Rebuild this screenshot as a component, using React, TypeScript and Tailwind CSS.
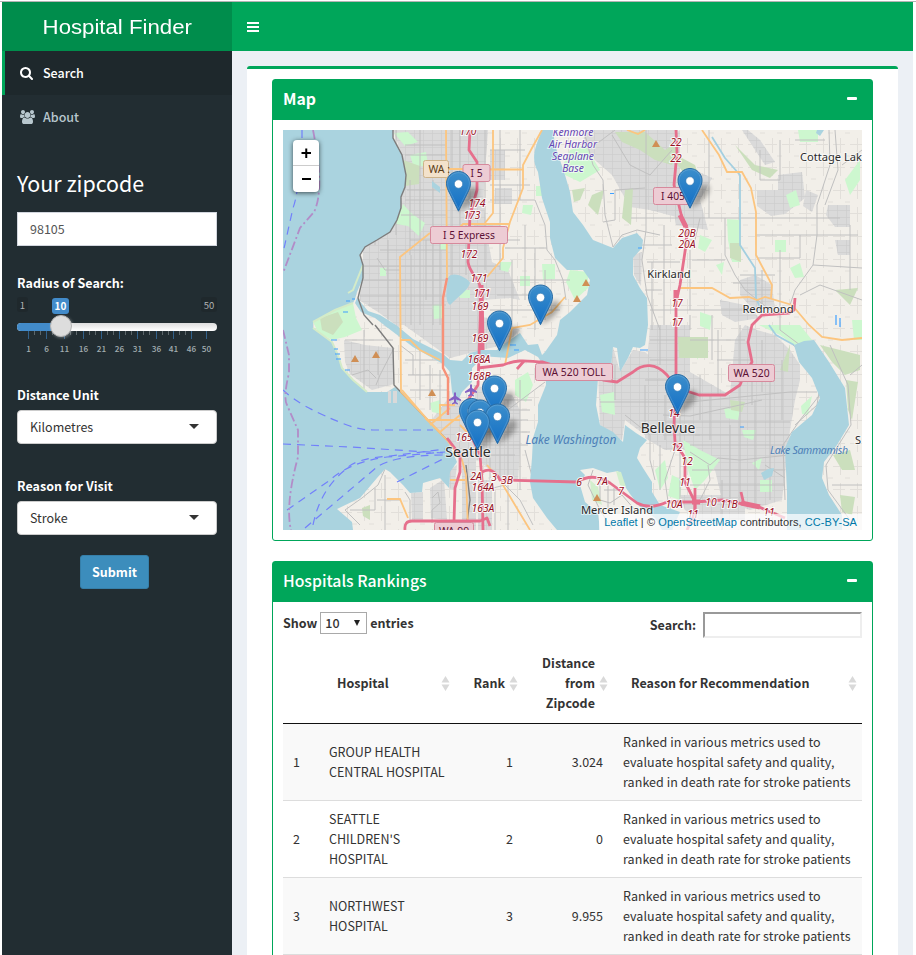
import React from "react";

const UI = "font-['Noto_Sans_CJK_SC','Noto_Sans_CJK_JP',sans-serif]";

function SearchIcon() {
  return (
    <svg viewBox="0 0 1664 1792" className="h-[14px] w-[13px]" fill="currentColor">
      <path d="M1152 832q0-185-131.5-316.5t-316.5-131.5-316.5 131.5-131.5 316.5 131.5 316.5 316.5 131.5 316.5-131.5 131.5-316.5zm512 832q0 52-38 90t-90 38q-54 0-90-38l-343-342q-179 124-399 124-143 0-273.5-55.5t-225-150-150-225-55.5-273.5 55.5-273.5 150-225 225-150 273.5-55.5 273.5 55.5 225 150 150 225 55.5 273.5q0 220-124 399l343 343q37 37 37 90z" />
    </svg>
  );
}

function UsersIcon() {
  return (
    <svg viewBox="0 0 1920 1792" className="h-[14px] w-[15px]" fill="currentColor">
      <path d="M593 896q-162 5-265 128h-134q-82 0-138-40.5t-56-118.5q0-353 124-353 6 0 43.5 21t97.5 42.5 119 21.5q67 0 133-23-5 37-5 66 0 139 81 256zM1664 1533q0 120-73 189.5t-194 69.5h-874q-121 0-194-69.5t-73-189.5q0-53 3.5-103.5t14-109 26.5-108.5 43-97.5 62-81 85.5-53.5 111.5-20q10 0 43 21.5t73 48 107 48 135 21.5 135-21.5 107-48 73-48 43-21.5q61 0 111.5 20t85.5 53.5 62 81 43 97.5 26.5 108.5 14 109 3.5 103.5zM640 256q0 106-75 181t-181 75-181-75-75-181 75-181 181-75 181 75 75 181zM1344 640q0 159-112.5 271.5t-271.5 112.5-271.5-112.5-112.5-271.5 112.5-271.5 271.5-112.5 271.5 112.5 112.5 271.5zM1920 865q0 78-56 118.5t-138 40.5h-134q-103-123-265-128 81-117 81-256 0-29-5-66 66 23 133 23 59 0 119-21.5t97.5-42.5 43.5-21q124 0 124 353zM1792 256q0 106-75 181t-181 75-181-75-75-181 75-181 181-75 181 75 75 181z" />
    </svg>
  );
}

const TICKS: [number, string][] = [
  [11.5, "1"], [29.5, "6"], [47.5, "11"], [66.5, "16"], [84.5, "21"], [102.5, "26"],
  [120.5, "31"], [139.5, "36"], [156.5, "41"], [174.5, "46"], [189.5, "50"],
];

function Slider() {
  return (
    <div className="relative h-[60px] w-[200px]">
      <span className="absolute left-0 top-[3px] flex h-[15px] w-[11px] items-center justify-center rounded-[3px] bg-[#1f282c] text-[9.5px] text-[#b0b3b4]">1</span>
      <span className="absolute right-0 top-[3px] flex h-[15px] w-[16px] items-center justify-center rounded-[3px] bg-[#1f282c] text-[9.5px] text-[#b0b3b4]">50</span>
      <span className="absolute left-[35px] top-[4px] flex h-[16px] w-[17px] items-center justify-center rounded-[3px] bg-[#428bca] text-[10px] font-bold text-white">10</span>
      <div className="absolute left-0 top-[29px] h-[8px] w-full rounded-[8px] bg-gradient-to-b from-[#dddddd] to-white" />
      <div className="absolute left-0 top-[29px] h-[8px] w-[44px] rounded-l-[8px] bg-[#428bca]" />
      <svg className="absolute left-0 top-[37px] h-[8px] w-[200px]" viewBox="0 0 200 8">
        {TICKS.map(([x], i) => (
          <g key={x}>
            <rect x={x - 0.5} y="0" width="1" height="8" fill="#32618a" />
            {i < 9 &&
              [6, 12].map((k) => <rect key={k} x={x - 0.5 + k} y="0" width="1" height="4" fill="#5d676b" />)}
          </g>
        ))}
      </svg>
      {TICKS.map(([x, t]) => (
        <span key={x} className="absolute top-[48px] w-5 -translate-x-1/2 text-center text-[8.2px] font-medium leading-[13px] text-[#a3aeb1]" style={{ left: x }}>{t}</span>
      ))}
      <div className="absolute left-[33px] top-[21px] h-[22px] w-[22px] rounded-full border border-[#b5b5b5] bg-[#dddddd] shadow-[1px_1px_3px_rgba(255,255,255,0.3)]" />
    </div>
  );
}

function Select({ value }: { value: string }) {
  return (
    <div className="flex h-[34px] w-[200px] items-center justify-between rounded-[4px] border border-[#cccccc] bg-white pl-[12px] pr-[17px] text-[12.5px] text-[#333]">
      <span>{value}</span>
      <span className="-mt-[2px] border-x-[5px] border-t-[5px] border-x-transparent border-t-[#333]" />
    </div>
  );
}

const WATER = [
  "M283 130H393L393 138 402 155 406 175 405 187 401 197 401 208 397 220 390 232 377 240 365 247 360 255 363 265 363 278 357 292 355 299 353 303 335 310 313 322 313 328 332 342 338 355 342 368 353 380 367 392 387 392 395 387 403 393 423 415 440 432 447 440 453 453 457 462 450 472 449 488 440 478 423 483 422 492 410 493 403 485 390 472 385 469 377 478 360 498 337 509 352 522 353 530H283Z",
  "M542 130C534 150 531 158 538 172L540 185 542 198 550 222 550 238 555 258 567 270 583 270 590 280 587 295 570 312 560 320 557 335 545 352 542 355 538 344 528 345 520 333 507 342 497 350 481 350 481 356 508 358 525 350 538 357 545 368 546 385 538 405 538 422 533 438 532 458 530 482 533 498 547 518 557 530H603L672 530 680 512 660 505 652 492 652 482 643 468 637 458 640 448 647 440 636 433 625 425 623 442 613 432 600 425 596 405 598 378 603 368 611 368 613 347 617 348 620 372 628 358 633 347 640 348 645 345 648 325 647 298 640 288 633 275 633 258 642 248 643 240 637 233 622 238 613 248 593 240 583 225 573 212 570 192 565 175 555 145 553 130Z",
  "M443 354L450 360 462 361 470 353 481 350 482 358 472 368 472 382 462 392 456 405 452 392 450 372 443 364 413 347 388 328 375 318 361 312 355 303 357 298 368 311 380 315 396 325 413 339Z",
  "M448 278C452 270 468 278 470 283 468 290 460 295 450 305 445 302 446 290 448 278Z",
  "M794 345L804 341 814 340 829 362 845 388 849 425 837 445 824 462 822 478 829 495 842 515 842 530H787V492L785 448 792 432 812 415 820 398 812 378 799 362Z",
  "M761 473L768 469 774 468 772 476 764 480Z",
  "M432 181L440 187 440 193 432 187Z",
  "M817 130H824L820 136 816 133Z",
];

const URBAN = [
  "M393 130L402 155 406 175 400 208 390 232 363 248 363 280 359 300 378 312 396 325H482V300L510 298 520 300 508 270 492 262 488 240 483 200 488 130Z",
  "M404 325L450 358 482 350 482 322ZM400 325H382L397 332Z",
  "M490 150H505V180H490ZM495 188H512V204H494Z",
  "M344 340L365 345 393 348 394 384 372 390 350 374 345 362Z",
  "M470 315L500 320 520 330 505 345 480 350Z",
  "M474 385L512 395 520 410 520 450 518 480 500 478 478 460Z",
  "M447 400L470 400 480 460 462 462 447 440 430 422Z",
  "M585 130H640L655 150 680 130V218L650 210 630 207 612 175 595 160 583 145Z",
  "M640 130H678V150H655Z",
  "M670 182L695 170 712 178 700 200 708 230 676 225Z",
  "M598 368H611L613 347 620 372 633 350 645 352 660 365V442L645 435 625 420 622 440 600 425Z",
  "M650 325H690V372L730 395 735 340 745 325 757 330 775 335 790 350 800 365 800 380 795 400 790 430 782 500 750 510 722 500 715 470 690 450 665 450 645 438V400Z",
  "M757 190H778V175L802 172 805 198 785 214 771 216 757 206Z",
  "M828 205H850V227H835L826 215ZM806 190L818 195 812 212 803 206Z",
  "M742 130L765 165 775 162 760 140 748 130Z",
  "M411 493L423 492 423 522 412 520ZM430 488L444 479 447 520 431 518ZM449 470L457 465 454 490 449 488Z",
  "M462 460H476V530H462ZM478 480H492V530H478Z",
  "M633 255L642 252 641 286 634 275Z",
  "M755 275L772 285 775 310 752 308 740 295 740 280ZM720 300L745 305 760 318 735 322 722 315Z",
  "M680 495H745V520H700L685 510ZM835 240H850V255H838Z",
];

const GREEN = [
  "M394 133L408 132 418 142 405 146ZM410 155L426 152 428 165 414 168ZM403 204L411 213 425 223 419 236 408 226 396 224Z",
  "M313 322L335 310 353 303 356 318 362 330 345 337 332 340 318 332Z",
  "M565 175L580 182 600 170 585 145 570 150 563 165ZM570 270L588 272 588 288 575 300 566 282Z",
  "M727 219L741 220 741 262 732 262 728 240Z",
  "M759 325L785 325 800 325 812 340 794 345 780 335ZM845 180L860 160V180L850 195Z",
  "M515 380L528 372 533 385 526 402 515 395ZM432 305L442 304 444 318 434 319Z",
  "M600 395L614 392 615 415 602 412ZM801 406L812 396 808 415 802 414Z",
  "M542 264L555 264 555 279 543 280ZM716 265L724 262 722 275ZM790 268L800 263 804 277 795 278Z",
  "M683 440L700 450 720 460 705 480 695 490 688 470ZM724 408L740 410 738 420 726 418Z",
  "M752 463L762 458 759 470ZM742 430L756 430 753 440 744 437ZM616 470H621L628 490 620 486Z",
  "M440 240L447 240 447 250 440 250ZM456 290H470V298H460ZM380 268H386V276H380ZM430 403L440 400 442 414 432 412ZM500 262H512L508 272 500 270ZM523 205L533 205 531 215 522 213ZM536 186H542L543 196H536ZM520 276H530V286H520ZM700 235L712 240 705 252 698 248Z",
  "M798 130H818V142H800ZM700 312L712 316 710 330 700 326ZM690 345H698V360ZM786 195L796 190 800 205 790 208ZM775 240H786V252H775ZM760 480H772V492H760ZM852 320H862V340H854ZM672 475L682 480 680 500 668 496ZM655 470L665 460 668 478 660 490Z",
];

const FOREST = [
  "M403 160L420 166 419 184 405 186ZM320 318L338 312 343 322 333 335 322 330Z",
  "M572 190L585 188 580 200 574 202ZM592 195L604 190 598 215 588 205ZM625 190L633 188 631 225 622 218Z",
  "M615 132L645 132 665 150 680 140 672 165 655 160 640 150 622 142Z",
  "M730 243L741 243 741 262 730 258ZM678 337H708V358H679Z",
  "M820 345L860 355V370L845 375 832 362ZM846 380L858 382 852 420 848 410ZM840 495L855 497 852 515 842 512Z",
  "M735 145L755 165 778 170 770 178 752 170ZM835 290L858 288 850 305Z",
  "M362 508L370 505 370 520 363 516ZM730 400L745 402 742 412 731 410ZM790 345L780 370 788 372Z",
  "M667 150L695 165 700 180 685 175ZM833 455L850 450 855 470 842 470Z",
];

const MINOR = [
  "M375 130V245M420 130V325M433 180V325M388 240V325M360 266H500M360 296H448M405 200H470M405 155H446M470 170V210M377 258L385 270H400M440 230V325M460 130V225M411 255V325",
  "M405 145H446M407 190H446M401 215H446M410 240H446M380 250H446M363 280H446M368 305H446M396 130V235M410 180V255M426 240V300M452 130V280M466 225V275M485 130V270M474 225H500",
  "M490 200H535L545 225 547 250 555 260 563 280 566 300M505 248H547M520 130V200M535 248V330M485 280H570M490 310H560M512 260V330M500 130V270M525 225V300M480 240H520M490 150H525M490 185H530M497 295H545M545 270V320",
  "M585 135L593 165 603 180 605 215 613 247 622 235 637 230 660 235M603 222L615 220 615 190 645 188M646 130V230L642 260 647 295 660 330M612 135L630 165 650 175 672 150M631 218H680M595 145L615 130M647 262H680M645 290L662 290M652 262V330M664 225V325M640 245H672M650 310H690",
  "M680 218H840M709 130V218M725 218V255L735 275 745 290 770 310M755 235H858M829 130L830 165 817 205V235L813 265 795 290 790 305M813 265L862 268M758 258H800V235M733 283H760M690 250V310M780 250V330L800 345 817 365 820 385 817 405 795 425M780 140V180H760V150M690 315V330M835 130L838 170 825 205M692 260H725M842 165L862 150M700 218L695 240H680M712 315V360M690 310H760M740 275H775M745 290H772M762 270V305M795 140H825M850 225V290M800 295L820 285 862 300",
  "M345 340H393M364 330V390M394 348L380 375 376 385M352 375L368 370 376 378M400 345L413 355V375M430 365V410M408 375H450M420 340V400M440 370V410M378 350V375M405 360H440M410 390H447",
  "M478 400H532M478 410H530M478 420H528M478 432H530M478 445H528M490 390V480M500 380V478M508 400V530M520 380V490M505 412L545 382M485 490L505 485 520 500 533 525M478 455H515M495 490V530M525 450L533 480",
  "M600 402H690L730 398 790 392H817M663 422H790M700 375V420M740 325V505M717 360H752M752 365V405M615 365V400M663 415L690 416 740 405 762 400M690 452L710 465 718 458 740 460 790 455M675 450L665 480 672 530M700 500L710 480 708 465M770 375V500M710 395V440M625 415L650 435 650 460 655 480M660 445V490M722 480V530M755 400V505M690 445H785M695 435H790M663 435H700M680 380V500M765 465L785 478",
  "M650 340H676M650 360H676M690 340H745M660 325V365M645 380H676M645 385V430M665 395V440M692 470H785M690 485H785M730 425V500M782 360V420M762 340V392M718 330V395",
  "M385 469L378 485 362 498 345 510 360 525M385 475V530M377 500H400M375 488V510H350M405 492L410 500V520M432 498L438 492 440 503 432 510V523M590 500L600 485 610 510 618 530M605 490L628 495M793 345L818 365 822 392 800 420 783 445 785 500M830 345L848 385 851 425 826 465 828 490 850 520M595 490L592 510M832 485H862M850 375L862 365",
];

const ORANGE = [
  "M446 130L447 278", "M430 233L400 257 401 392 428 420H460", "M401 340L410 340 420 350 440 360",
  "M542 130L532 148 523 165 523 188 510 222 503 248 503 258 487 277", "M493 130V213L485 223", "M490 169.500H523", "M446 169H465M455 232L463 224H510",
  "M565 297L552 312 530 325 512 328 505 365", "M402 390L432 425 447 440 462 460 466 475 468 530M425 418L440 432M455 405H440V420M430 425L450 408M440 432L460 415M460 425L475 440M450 480H465M487 465L500 480 515 505 530 530", "M387 499H400L408 518",
  "M702 130L719 155 727 172H742L751 188 756 212V255L772 285 771 298", "M680 288H712L730 298 749 297 757 300 765 297 792 305 809 325 822 337 842 340 862 338", "M627 130L638 134 645 130",
];

const MOTOR = [
  "M470 130L469 150 477 162 477 190 470 215 468 262C470 275 480 278 481 290L480 325 478 385 468 400 466 425 480 455 482 480 483 530",
  "M478 368L503 365C520 358 530 362 543 362L603 380 617 382 633 372C643 363 656 363 667 375L677 388 699 395H725L740 385 744 375 752 362 748 342 752 325 762 315 789 313 794 310 795 298",
  "M676 130L677 152 674 185 682 218 687 228 686 245 680 285 676 302V375L674 425 675 442 685 458V482L695 502V512L687 530",
  "M482 472Q493 466 500 480L577 482Q593 472 610 483L637 503Q650 510 667 502L695 502 722 500 759 507 785 518",
  "M447 438L460 455V472L455 488 454 522M405 530Q404 521 412 521H480L487 518 490 526M741 492L744 505M517 369L524 361M695 488V520",
];

const LABELS: [number, number, string][] = [
  [468, 131, "170"], [477, 203, "174"], [472, 215, "173"], [469, 254, "172"], [479, 278, "171"], [482, 293, "171"],
  [480, 306, "169"], [480, 338, "169"], [479, 359, "168A"], [479, 376, "168B"], [464, 437, "165"], [476, 476, "2A"],
  [483, 487.500, "164A"], [494, 477, "3"], [507, 480, "3B"], [483, 508, "163A"], [676, 142.500, "22"], [676, 158, "22"],
  [687, 233, "20B"], [687, 244, "20A"], [677, 303, "17"], [677, 322.500, "17"], [674, 413, "14"], [677, 447, "12"],
  [687, 461, "12"], [685, 482, "11"], [674, 504, "10A"], [711, 502, "10"], [729, 504, "11B"], [769, 512, "11"],
  [579, 482, "6"], [602, 481, "7A"], [621, 491, "7"], [693, 514, "11"],
];

const PLACES: [number, number, string, number][] = [
  [831, 161, "Cottage Lak", 11.1], [669, 277.500, "Kirkland", 11.2], [768, 313, "Redmond", 11.2], [668, 433, "Bellevue", 13.8],
  [468, 457, "Seattle", 14.2], [617, 514, "Mercer Island", 11.2], [858, 444, "S", 11],
];

const SHIELDS: [number, number, number, string][] = [
  [463, 164.500, 27, "I 5"], [430.500, 226.500, 77, "I 5 Express"], [653.500, 187.500, 39, "I 405"],
  [535.500, 363.500, 77, "WA 520 TOLL"], [728.500, 364.500, 46, "WA 520"], [434.500, 522.500, 39, "WA 99"],
];

const PEAKS = [[656, 144], [586, 283], [577, 299], [355, 359], [376, 355], [432, 393], [597, 498]];

const MARKERS = [[458.5, 171], [690, 168], [540.5, 284.5], [499.5, 310.5], [677.5, 374], [494.5, 375.5], [471.5, 398], [480, 399.5], [497.5, 403.5], [477.5, 409.5]];

function MapView() {
  return (
    <svg viewBox="283 130 579 400" className="absolute inset-0 h-[400px] w-[579px] font-['Noto_Sans',sans-serif]">
      <defs>
        <linearGradient id="pin" x1="0" y1="0" x2="0" y2="1">
          <stop offset="0" stopColor="#3c8ecb" />
          <stop offset="1" stopColor="#126fc6" />
        </linearGradient>
        <pattern id="streets" width="9" height="7" patternUnits="userSpaceOnUse">
          <path d="M0 .5H9M.5 0V7" stroke="#cdcdcd" strokeWidth="0.7" fill="none" />
        </pattern>
        <pattern id="lanes" width="17" height="23" patternUnits="userSpaceOnUse">
          <path d="M0 6.500H12M7.500 0V15M12 18H17" stroke="#e2dfda" strokeWidth="1" fill="none" />
        </pattern>
        <filter id="soft" x="-50%" y="-50%" width="200%" height="200%"><feGaussianBlur stdDeviation="2.4" /></filter>
      </defs>
      <rect x="283" y="130" width="579" height="400" fill="#f2efe9" />
      <rect x="283" y="130" width="579" height="400" fill="url(#lanes)" />
      {URBAN.map((d) => <path key={d} d={d} fill="#dadada" />)}
      {URBAN.map((d) => <path key={"s" + d} d={d} fill="url(#streets)" />)}
      {GREEN.map((d) => <path key={d} d={d} fill="#cdf7cf" />)}
      {FOREST.map((d) => <path key={d} d={d} fill="#cbdfbd" />)}
      <g fill="none" stroke="#c0c0c0" strokeWidth="1">{MINOR.map((d) => <path key={d} d={d} />)}</g>
      {WATER.map((d) => <path key={d} d={d} fill="#aad3df" />)}
      <path d="M388 391h3v12h-3zM393 391h4v12h-4z" fill="#d9d9d9" />
      <path d="M580 470L593 468 607 473 618 471 622 482 630 494 640 507 655 518 662 530H600L598 513 585 502 580 485 585 475Z" fill="#f2efe9" />
      <path d="M616 471L621 472 626 487 620 485ZM590 480L598 487 602 505 592 500Z" fill="#d2efcd" />
      <path d="M593 470L588 485 600 510 612 529M600 480V500L610 503 622 495 635 510M604 490H620M608 485V510M614 488V505" stroke="#bdbdbd" fill="none" />
      <path d="M353 303L335 310 313 322M313 328L332 342 338 355 342 368 353 380 367 392M363 265L353 290 348 293" stroke="#d4ebc8" strokeWidth="2" fill="none" />
      <path d="M331 340h6M334 349h4M335 354h5M336 359h5M345 370h5M343 312h5M346 301h4M352 299h3M610 193.500h4M638 248h4M640 350h8M510 345h6M514 350h5M740 427h4M836 315v10M840 318v9" stroke="#3fa0ff" strokeWidth="1.2" />
      <path d="M712 137L725 158 740 175V245L755 268 756 298 762 312M769 325L776 335 794 345" stroke="#a3cfe0" strokeWidth="1.8" fill="none" />
      <path d="M393 130L393 138 402 155 406 175 405 187 401 197 401 208 397 220 390 232 377 240 365 247 360 255 363 265 363 278 358 298 364 315 373 325M375 325L393 348 394 385 423 415 447 440M466 465L470 500 466 530" stroke="#7d7d7d" strokeWidth="1.4" fill="none" />
      <g fill="none" stroke="#fcc57f" strokeWidth="1.8">{ORANGE.map((d) => <path key={d} d={d} />)}</g>
      <path d="M447 278L443 298V368L448 378V415" stroke="#f79178" strokeWidth="2.4" fill="none" />
      <g fill="none" stroke="#e66f8c" strokeWidth="2.8" strokeLinejoin="round">{MOTOR.map((d) => <path key={d} d={d} />)}</g>
      <path d="M481 285L482 350M676 290V300M686 227L680 215M692 502H700M741 503L760 507" stroke="#e66f8c" strokeWidth="5" fill="none" />
      <g fill="none" stroke="#7280fb" strokeWidth="1.2" strokeDasharray="8 6">
        <path d="M283 390Q300 407 347 425 360 430 373 430H433" />
        <path d="M283 444L350 447 443 453" />
        <path d="M287 510L330 480Q350 462 387 457L445 452" />
        <path d="M305 528L377 467Q395 455 445 455" />
        <path d="M313 525Q320 490 345 470 355 458 390 456L445 449" />
        <path d="M397 482L447 457" />
        <path d="M302 130V150Q298 195 293 208L283 253" />
      </g>
      <g fill="none" stroke="#b28cc8" strokeWidth="1.8" strokeDasharray="9 3 2 3">
        <path d="M313 130Q325 190 314 212L300 228 283 273" />
        <path d="M283 330L289 355V373Q283 398 287 405L298 430V457Q285 505 291 530" />
      </g>
      {PEAKS.map(([x, y]) => <path key={x} d={`M${x} ${y - 4}L${x + 4} ${y + 3}H${x - 4}Z`} fill="#d08f55" />)}
      {[[455, 398], [471, 390]].map(([x, y]) => (
        <path key={x} transform={`translate(${x} ${y})`} d="M0-6L1-5V-2L6 1.500V3L1 1.500V4L3 5.500V6.500L0 5.500-3 6.500V5.500L-1 4V1.500L-6 3V1.500L-1-2V-5Z" fill="#8461c4" />
      ))}
      <rect x="423.5" y="160.500" width="25" height="17" rx="2" fill="#f3e2cb" stroke="#cdb38b" />
      <text x="428.500" y="173" fontSize="10.5" fill="#5a3b16">WA :</text>
      {SHIELDS.map(([x, y, w, t]) => (
        <g key={t}>
          <rect x={x} y={y} width={w} height="17" rx="2" fill="#edccd4" stroke="#d6899c" />
          <text x={x + w / 2} y={y + 12.3} textAnchor="middle" fontSize="10.3" fill="#5c1035">{t}</text>
        </g>
      ))}
      <g fontSize="10.3" fontStyle="italic" textAnchor="middle" fill="#960f24" stroke="#ffffff" strokeOpacity="0.85" strokeWidth="2" paintOrder="stroke">
        {LABELS.map(([x, y, t]) => <text key={`${x}-${y}`} x={x} y={y + 3.5}>{t}</text>)}
      </g>
      <g textAnchor="middle" fill="#2b2b2b" stroke="#ffffff" strokeOpacity="0.6" strokeWidth="2" paintOrder="stroke">
        {PLACES.map(([x, y, t, s]) => <text key={t} x={x} y={y} fontSize={s}>{t}</text>)}
      </g>
      <g textAnchor="middle" fontStyle="italic" fontSize="10.3" fill="#6647b3" stroke="#ffffff" strokeOpacity="0.6" strokeWidth="2" paintOrder="stroke">
        <text x="573" y="136">Kenmore</text><text x="573" y="148">Air Harbor</text><text x="573" y="160">Seaplane</text><text x="573" y="172">Base</text>
      </g>
      <g textAnchor="middle" fontStyle="italic" fill="#4d80b8">
        <text x="571" y="444" fontSize="12" textLength="91">Lake Washington</text><text x="809" y="454" fontSize="10.5" textLength="78">Lake Sammamish</text>
      </g>
      {MARKERS.map(([x, y]) => <path key={`sh${x}`} d={`M${x} ${y + 40}L${x + 8} ${y + 20}Q${x + 17} ${y + 12} ${x + 20} ${y + 21}Q${x + 16} ${y + 34} ${x} ${y + 40}Z`} fill="#000" opacity="0.3" filter="url(#soft)" />)}
      {MARKERS.map(([x, y]) => (
        <g key={`m${x}`} transform={`translate(${x - 12.5} ${y})`}>
          <path d="M12.500 .5C6 .5.5 5.700.5 12.300.5 16 2 19 3.500 22L12.500 40.200 21.500 22C23 19 24.500 16 24.500 12.300 24.500 5.700 19 .5 12.500 .5Z" fill="url(#pin)" stroke="#2a6da5" />
          <path d="M12.500 1.600C6.700 1.600 1.600 6.300 1.600 12.300 1.600 15.800 3 18.500 4.500 21.500L12.500 37.600 20.500 21.500C22 18.500 23.400 15.800 23.400 12.300 23.400 6.300 18.300 1.600 12.500 1.600Z" fill="none" stroke="#fff" strokeOpacity="0.14" />
          <circle cx="12.5" cy="13" r="4.2" fill="#fff" stroke="#2f76b0" strokeWidth="0.6" />
        </g>
      ))}
    </svg>
  );
}

function Box({ title, bold, className, children }: { title: string; bold?: boolean; className: string; children: React.ReactNode }) {
  return (
    <section className={`rounded-[3px] border border-[#00a65a] bg-white ${className}`}>
      <header className="flex h-[40px] items-center justify-between bg-[#00a65a] pb-[3px] pl-[10px] pr-[15px] text-white">
        <h3 className={`text-[15.8px] leading-[18px] ${bold ? "font-bold" : "font-medium"}`}>{title}</h3>
        <span className="h-[3px] w-[10px] rounded-[1px] bg-white" />
      </header>
      {children}
    </section>
  );
}

function Sort() {
  return (
    <svg viewBox="0 0 9 15" className="absolute right-[5px] h-[15px] w-[9px]" fill="#d9d9d9">
      <path d="M4.500 0L8.500 6.500H.5ZM.5 8.500H8.500L4.500 15Z" />
    </svg>
  );
}

const ROWS = [
  ["1", "GROUP HEALTH CENTRAL HOSPITAL", "1", "3.024"],
  ["2", "SEATTLE CHILDREN'S HOSPITAL", "2", "0"],
  ["3", "NORTHWEST HOSPITAL", "3", "9.955"],
];

export default function App() {
  return (
    <div className={`h-[955px] w-[916px] overflow-hidden bg-white pl-[2px] pr-[3px] text-[12.5px] leading-[20px] text-[#333] ${UI}`}>
      <div className="-ml-[2px] -mr-[3px] h-[2px] border-b border-[#b4b4b4]" />
      <header className="flex h-[49px] text-white">
        <div className="flex w-[230px] items-center justify-center bg-[#008d4c] font-['Liberation_Sans',sans-serif] text-[20px]">
          <span className="scale-x-[1.11]">Hospital Finder</span>
        </div>
        <div className="flex flex-1 items-center bg-[#00a65a] pl-[15px]">
          <svg viewBox="0 0 12 10" className="h-[10px] w-[12px]" fill="currentColor"><path d="M0 0h12v2H0zM0 4h12v2H0zM0 8h12v2H0z" /></svg>
        </div>
      </header>
      <div className="flex h-[904px]">
        <aside className="flex w-[230px] flex-col bg-[#222d32] text-white">
          <nav>
            <div className="flex h-[44px] items-center border-l-[3px] border-[#00a65a] bg-[#1e282c] pl-[15px] font-medium">
              <span className="w-[23px]"><SearchIcon /></span>Search
            </div>
            <div className="flex h-[44px] items-center border-l-[3px] border-transparent pl-[15px] font-medium text-[#b8c7ce]">
              <span className="w-[23px]"><UsersIcon /></span>About
            </div>
          </nav>
          <div className="flex flex-col pl-[15px]">
            <h3 className="mt-[31px] text-[21.4px] leading-[26px]">Your zipcode</h3>
            <div className="mt-[16px] flex h-[34px] w-[200px] items-center border border-[#d2d6de] bg-white pl-[12px] text-[12.5px] text-[#555]">98105</div>
            <div className="mt-[27px] font-bold tracking-[0.05px]">Radius of Search:</div>
            <div className="mt-[1px]"><Slider /></div>
            <div className="mt-[31px] font-bold">Distance Unit</div>
            <div className="mt-[5px]"><Select value="Kilometres" /></div>
            <div className="mt-[32px] font-bold tracking-[0.05px]">Reason for Visit</div>
            <div className="mt-[5px]"><Select value="Stroke" /></div>
            <button className="ml-[63px] mt-[20px] h-[34px] w-[69px] rounded-[3px] border border-[#367fa9] bg-[#3c8dbc] font-bold">Submit</button>
          </div>
        </aside>
        <main className="flex-1 bg-[#ecf0f5] pl-[15px] pr-[15px] pt-[15px]">
          <div className="h-[900px] rounded-t-[3px] border-t-[3px] border-[#00a65a] bg-white px-[25px] pt-[10px]">
            <Box title="Map" bold className="h-[462px]">
              <div className="p-[10px]">
                <div className="relative h-[400px] w-[579px] overflow-hidden bg-[#aad3df]">
                  <MapView />
                  <div className="absolute left-[10px] top-[10px] w-[26px] rounded-[4px] bg-white shadow-[0_1px_5px_rgba(0,0,0,0.65)]">
                    <div className="relative h-[26px] border-b border-[#ccc]">
                      <svg viewBox="0 0 26 52" className="absolute left-0 top-0 h-[52px] w-[26px]"><path d="M8.500 13H18M13.250 8.500V18M9 39H18" stroke="#000" strokeWidth="2" /></svg>
                    </div>
                    <div className="h-[26px]" />
                  </div>
                  <div className="absolute bottom-0 right-0 bg-white/70 px-[5px] font-['Liberation_Sans',sans-serif] text-[11px] leading-[16px] tracking-[0.08px] text-[#333]">
                    <span className="text-[#0078a8]">Leaflet</span> | © <span className="text-[#0078a8]">OpenStreetMap</span> contributors, <span className="text-[#0078a8]">CC-BY-SA</span>
                  </div>
                </div>
              </div>
            </Box>
            <Box title="Hospitals Rankings" className="mt-[20px] h-[500px]">
              <div className="px-[10px] pt-[10px]">
                <div className="flex h-[31px] items-start justify-between font-bold">
                  <div className="flex h-[22px] items-center">
                    Show
                    <span className="ml-[3px] mr-[3px] flex h-[22px] w-[47px] items-center justify-between border border-[#a9a9a9] bg-white pl-[4px] pr-[6px] font-medium">
                      10
                      <span className="border-x-[3px] border-t-[6px] border-x-transparent border-t-[#222]" />
                    </span>
                    entries
                  </div>
                  <div className="flex h-[26px] items-center">
                    Search:
                    <span className="ml-[7px] h-[26px] w-[159px] border-2 border-b-[#eeeeee] border-l-[#999] border-r-[#eeeeee] border-t-[#999] bg-white" />
                  </div>
                </div>
                <div className="grid h-[81px] grid-cols-[36px_136px_68px_90px_249px] items-center border-b border-[#111] font-bold">
                  <span />
                  <div className="relative flex items-center pl-[18px]">Hospital<Sort /></div>
                  <div className="relative flex items-center justify-end pr-[18px]">Rank<Sort /></div>
                  <div className="relative flex items-center justify-end pr-[18px] text-right tracking-[0.05px]">Distance<br />from<br />Zipcode<Sort /></div>
                  <div className="relative flex items-center pl-[18px] tracking-[0.04px]">Reason for Recommendation<Sort /></div>
                </div>
                {ROWS.map(([n, name, rank, dist], i) => (
                  <div
                    key={n}
                    className={`grid grid-cols-[36px_136px_68px_90px_249px] items-center py-[8px] ${i ? "border-t border-[#ddd]" : ""} ${i % 2 ? "bg-white" : "bg-[#f9f9f9]"}`}
                  >
                    <span className="pl-[10px]">{n}</span>
                    <span className="pl-[10px] pr-[8px]">{name}</span>
                    <span className="pr-[10px] text-right">{rank}</span>
                    <span className="pr-[10px] text-right">{dist}</span>
                    <span className="whitespace-nowrap pl-[10px] tracking-[0.07px]">Ranked in various metrics used to<br />evaluate hospital safety and quality,<br />ranked in death rate for stroke patients</span>
                  </div>
                ))}
                <div className="border-t border-[#ddd]" />
              </div>
            </Box>
          </div>
        </main>
      </div>
    </div>
  );
}
